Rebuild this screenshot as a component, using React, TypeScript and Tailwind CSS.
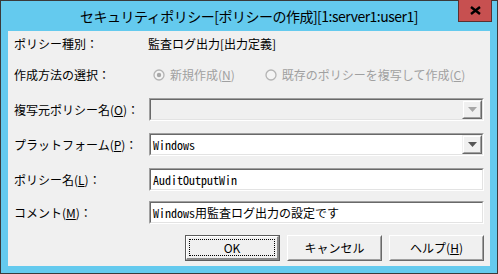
import React from "react";

const jp = "font-['Noto_Sans_CJK_JP',sans-serif]";
const mono = "font-['Noto_Sans_Mono_CJK_JP','Noto_Sans_CJK_JP',monospace]";

function Sunken({ children, white, h }: { children?: React.ReactNode; white?: boolean; h: string }) {
  return (
    <div className={`w-[335px] ${h} flex border-t border-l border-t-[#a0a0a0] border-l-[#a0a0a0] border-b border-r border-b-white border-r-white`}>
      <div
        className={`flex-1 flex border-t border-l border-t-[#696969] border-l-[#696969] border-b border-r border-b-[#e3e3e3] border-r-[#e3e3e3] ${
          white ? "bg-white" : "bg-[#f0f0f0]"
        }`}
      >
        {children}
      </div>
    </div>
  );
}

function Combo({ value, disabled }: { value?: string; disabled?: boolean }) {
  return (
    <Sunken white={!disabled} h="h-[23px]">
      <div className={`flex-1 flex items-center pl-[2px] text-[12px] text-black ${mono}`}>{value}</div>
      <div className="w-[20px] flex border-t border-l border-t-[#f0f0f0] border-l-[#f0f0f0] border-b border-r border-b-[#696969] border-r-[#696969]">
        <div className="flex-1 flex items-center justify-center bg-[#f0f0f0] border-t border-l border-t-white border-l-white border-b border-r border-b-[#a0a0a0] border-r-[#a0a0a0]">
          <svg width="9" height="5" viewBox="0 0 9 5">
            <path d="M0 0 H9 L4.5 5 Z" fill={disabled ? "#a6a6a6" : "#555555"} />
          </svg>
        </div>
      </div>
    </Sunken>
  );
}

function Input({ value }: { value: React.ReactNode }) {
  return (
    <Sunken white h="h-[23px]">
      <div className={`flex-1 flex items-center pl-[2px] text-[12px] text-black whitespace-nowrap`}>{value}</div>
    </Sunken>
  );
}

function Label({ children }: { children: React.ReactNode }) {
  return <div className="w-[135px] shrink-0 text-[12px] leading-none text-black whitespace-nowrap">{children}</div>;
}

function Radio({ checked }: { checked?: boolean }) {
  return (
    <svg width="12" height="12" viewBox="0 0 12 12" className="shrink-0">
      <circle cx="6" cy="6" r="5" fill="#f4f4f4" stroke="#b4b4b4" strokeWidth="1.3" />
      {checked && <circle cx="6" cy="6" r="2.2" fill="#a8a8a8" />}
    </svg>
  );
}

function Btn({ children, def }: { children: React.ReactNode; def?: boolean }) {
  if (def) {
    return (
      <div className="w-[95px] h-[26px] flex border border-[#5c5c5c]">
        <div className="flex-1 flex border-t border-l border-t-white border-l-white border-b-2 border-r-2 border-b-[#8a8a8a] border-r-[#8a8a8a] bg-[#f0f0f0] p-[2px]">
          <div className="flex-1 flex items-center justify-center border border-dotted border-black text-[12px] text-black">
            {children}
          </div>
        </div>
      </div>
    );
  }
  return (
    <div className="w-[95px] h-[26px] flex border-t border-l border-t-white border-l-white border-b border-r border-b-[#696969] border-r-[#696969]">
      <div className="flex-1 flex items-center justify-center bg-[#f0f0f0] border-t border-l border-t-[#f0f0f0] border-l-[#f0f0f0] border-b border-r border-b-[#a0a0a0] border-r-[#a0a0a0] text-[12px] text-black">
        {children}
      </div>
    </div>
  );
}

export default function App() {
  return (
    <div className={`relative w-[498px] h-[274px] border border-[#3a3a3a] bg-[#64caee] flex flex-col ${jp}`}>
      <div className="h-[30px] flex items-center justify-center">
        <div className="text-[14px] tracking-[-0.5px] text-black whitespace-nowrap mt-[1px]">
          セキュリティポリシー[ポリシーの作成][1:server1:user1]
        </div>
      </div>
      <div className="absolute top-[-1px] right-[5px] w-[34px] h-[22px] bg-[#c75050] border-x border-b border-[#5a3030] flex items-center justify-center">
        <svg width="11" height="9" viewBox="0 0 11 9">
          <path d="M1 1 L10 8 M10 1 L1 8" stroke="#000" strokeWidth="2.4" />
        </svg>
      </div>

      <div className="mx-[7px] h-[235px] bg-[#f0f0f0] flex flex-col px-[6px]">
        <div className="h-[26px] flex items-center">
          <Label>ポリシー種別：</Label>
          <div className="text-[12px] leading-none text-black -ml-[1px]">監査ログ出力[出力定義]</div>
        </div>
        <div className="h-[26px] mt-[5px] flex items-center">
          <Label>作成方法の選択：</Label>
          <div className="flex items-center text-[12px] leading-none text-[#a0a0a0]">
            <div className="ml-[4px] flex items-center gap-[5px]">
              <Radio checked />
              <span>
                新規作成(<u>N</u>)
              </span>
            </div>
            <div className="ml-[30px] flex items-center gap-[5px]">
              <Radio />
              <span>
                既存のポリシーを複写して作成(<u>C</u>)
              </span>
            </div>
          </div>
        </div>
        <div className="mt-[10px] flex items-center">
          <Label>
            複写元ポリシー名(<u>O</u>)：
          </Label>
          <Combo disabled />
        </div>
        <div className="mt-[12px] flex items-center">
          <Label>
            プラットフォーム(<u>P</u>)：
          </Label>
          <Combo value="Windows" />
        </div>
        <div className="mt-[12px] flex items-center">
          <Label>
            ポリシー名(<u>L</u>)：
          </Label>
          <Input value={<span className={mono}>AuditOutputWin</span>} />
        </div>
        <div className="mt-[10px] flex items-center">
          <Label>
            コメント(<u>M</u>)：
          </Label>
          <Input
            value={
              <span className={mono}>Windows用監査ログ出力の設定です</span>
            }
          />
        </div>
        <div className="mt-[11px] flex justify-end gap-[7px] pr-[-1px]">
          <Btn def>OK</Btn>
          <Btn>キャンセル</Btn>
          <Btn>
            ヘルプ(<u>H</u>)
          </Btn>
        </div>
      </div>
    </div>
  );
}
